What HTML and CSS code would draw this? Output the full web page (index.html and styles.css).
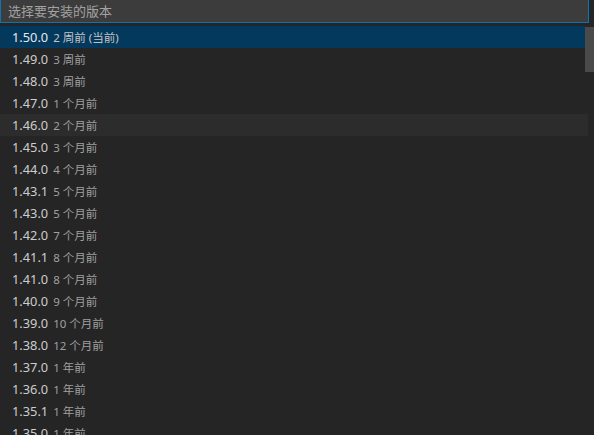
FILE: index.html
```html
<!DOCTYPE html>
<html lang="zh-CN">
<head>
<meta charset="utf-8">
<link rel="stylesheet" href="styles.css">
</head>
<body>
<div class="quick-pick">
  <div class="input-box"><span class="placeholder">选择要安装的版本</span></div>
  <div class="list">
    <div class="row selected"><span class="ver">1.50.0</span><span class="desc">2 周前 (当前)</span></div>
    <div class="row"><span class="ver">1.49.0</span><span class="desc">3 周前</span></div>
    <div class="row"><span class="ver">1.48.0</span><span class="desc">3 周前</span></div>
    <div class="row"><span class="ver">1.47.0</span><span class="desc">1 个月前</span></div>
    <div class="row hover"><span class="ver">1.46.0</span><span class="desc">2 个月前</span></div>
    <div class="row"><span class="ver">1.45.0</span><span class="desc">3 个月前</span></div>
    <div class="row"><span class="ver">1.44.0</span><span class="desc">4 个月前</span></div>
    <div class="row"><span class="ver">1.43.1</span><span class="desc">5 个月前</span></div>
    <div class="row"><span class="ver">1.43.0</span><span class="desc">5 个月前</span></div>
    <div class="row"><span class="ver">1.42.0</span><span class="desc">7 个月前</span></div>
    <div class="row"><span class="ver">1.41.1</span><span class="desc">8 个月前</span></div>
    <div class="row"><span class="ver">1.41.0</span><span class="desc">8 个月前</span></div>
    <div class="row"><span class="ver">1.40.0</span><span class="desc">9 个月前</span></div>
    <div class="row"><span class="ver">1.39.0</span><span class="desc">10 个月前</span></div>
    <div class="row"><span class="ver">1.38.0</span><span class="desc">12 个月前</span></div>
    <div class="row"><span class="ver">1.37.0</span><span class="desc">1 年前</span></div>
    <div class="row"><span class="ver">1.36.0</span><span class="desc">1 年前</span></div>
    <div class="row"><span class="ver">1.35.1</span><span class="desc">1 年前</span></div>
    <div class="row"><span class="ver">1.35.0</span><span class="desc">1 年前</span></div>
    <div class="scrollbar"></div>
  </div>
</div>
</body>
</html>
```
FILE: styles.css
```css
html, body {
  margin: 0;
  padding: 0;
  background: #252526;
  height: 100%;
  overflow: hidden;
}
body {
  font-family: "Noto Sans", "Noto Sans CJK SC", sans-serif;
  color: #cccccc;
}
.quick-pick {
  width: 594px;
}
.input-box {
  box-sizing: border-box;
  width: 589px;
  height: 23px;
  background: #3c3c3c;
  border: 1px solid #0e73b5;
  border-top: none;
  padding-left: 7px;
  display: flex;
  align-items: center;
}
.placeholder {
  font-size: 13px;
  color: #a2a2a2;
  line-height: 16px;
}
.list {
  position: relative;
  margin-top: 3px;
  width: 588px;
}
.row {
  height: 22px;
  display: flex;
  align-items: center;
  padding-left: 12px;
  white-space: nowrap;
}
.row.selected {
  background: #04395e;
  margin-right: 3px;
}
.row.hover {
  background: #2c2c2d;
}
.ver {
  font-size: 12.8px;
  color: #cccccc;
}
.desc {
  font-size: 11.5px;
  color: #a0a0a0;
  margin-left: 5px;
}
.selected .ver { color: #e8e8e8; }
.selected .desc { color: #c4c4c4; }
.scrollbar {
  position: absolute;
  top: 1px;
  left: 585px;
  width: 9px;
  height: 45px;
  background: #4a4a4b;
}
```
